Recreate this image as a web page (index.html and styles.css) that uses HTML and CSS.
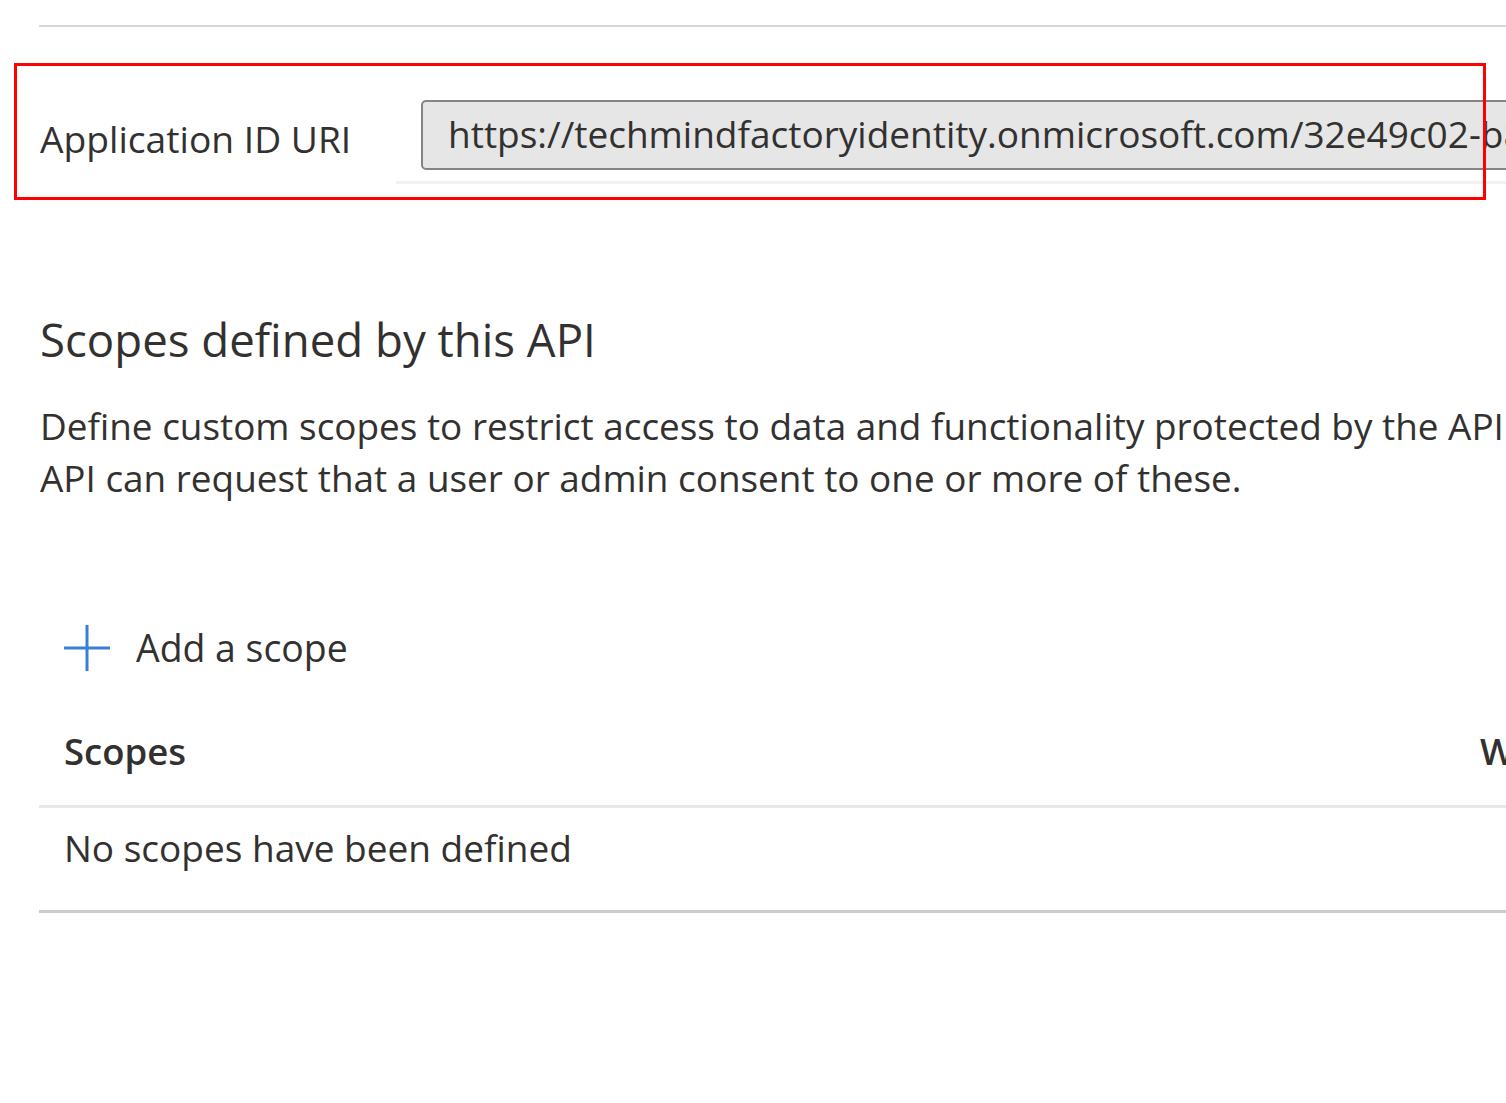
FILE: index.html
```html
<!DOCTYPE html>
<html lang="en">
<head>
<meta charset="utf-8">
<title>Expose an API</title>
<link rel="stylesheet" href="styles.css">
</head>
<body>
<div class="page">
  <div class="topline"></div>

  <div class="uri-row">
    <div class="uri-label">Application ID URI</div>
    <div class="uri-input">https://techmindfactoryidentity.onmicrosoft.com/32e49c02-b8a1-4c2e-9d3f-7a51c0e2b6d4</div>
  </div>
  <div class="uri-underline"></div>
  <div class="highlight"></div>

  <h2 class="section-title">Scopes defined by this API</h2>
  <p class="section-desc">Define custom scopes to restrict access to data and functionality protected by the API. An application that requires access to parts of this<br>API can request that a user or admin consent to one or more of these.</p>

  <div class="add-row">
    <svg class="plus" width="46" height="46" viewBox="0 0 46 46" aria-hidden="true">
      <line x1="23" y1="0" x2="23" y2="46" stroke="#3a7fd6" stroke-width="3"/>
      <line x1="0" y1="23" x2="46" y2="23" stroke="#3a7fd6" stroke-width="3"/>
    </svg>
    <span class="add-text">Add a scope</span>
  </div>

  <div class="table">
    <div class="thead">
      <div class="th th-scope">Scopes</div>
      <div class="th">Who can consent</div>
    </div>
    <div class="trow">
      <div class="td">No scopes have been defined</div>
    </div>
  </div>
</div>
</body>
</html>
```

FILE: styles.css
```css
html, body {
  margin: 0;
  padding: 0;
  background: #ffffff;
}
body {
  width: 1506px;
  overflow: hidden;
  font-family: "Open Sans", "Noto Sans", "Liberation Sans", sans-serif;
  color: #323130;
}
.page {
  position: relative;
  padding-top: 25px;
  padding-bottom: 190px;
}
.topline {
  margin-left: 39px;
  height: 2px;
  background: #d6d6d6;
}
.uri-row {
  margin-top: 73px;
  display: flex;
  align-items: center;
  height: 70px;
  padding-left: 40px;
  white-space: nowrap;
}
.uri-label {
  flex: none;
  width: 381px;
  font-size: 37.2px;
  line-height: 52px;
  position: relative;
  top: 4px;
}
.uri-input {
  flex: none;
  box-sizing: border-box;
  width: 1400px;
  height: 70px;
  border: 2px solid #858585;
  border-radius: 5px;
  background: #e6e6e6;
  padding-left: 25px;
  font-size: 37px;
  line-height: 64px;
  color: #323130;
  overflow: hidden;
}
.uri-underline {
  margin: 11px 0 0 396px;
  height: 3px;
  background: #f1f1f1;
}
.highlight {
  position: absolute;
  left: 14px;
  top: 63px;
  width: 1472px;
  height: 137px;
  box-sizing: border-box;
  border: 3px solid #ff0000;
}
.section-title {
  margin: 124px 0 0 40px;
  font-size: 45.6px;
  font-weight: 400;
  line-height: 62px;
  white-space: nowrap;
}
.section-desc {
  margin: 30px 0 0 40px;
  font-size: 36.9px;
  line-height: 52px;
  white-space: nowrap;
}
.add-row {
  margin: 114px 0 0 64px;
  display: flex;
  align-items: center;
  height: 60px;
}
.plus {
  flex: none;
  display: block;
}
.add-text {
  margin-left: 26px;
  font-size: 37.4px;
  line-height: 52px;
}
.table {
  margin-left: 39px;
}
.thead {
  display: flex;
  padding: 47px 0 28px 25px;
  border-bottom: 3px solid #e8e8e8;
  white-space: nowrap;
}
.th {
  font-size: 36.5px;
  font-weight: 600;
  line-height: 52px;
}
.th-scope {
  flex: none;
  width: 1416px;
}
.trow {
  padding: 14px 0 36px 25px;
  border-bottom: 3px solid #cccccc;
}
.td {
  font-size: 37px;
  line-height: 52px;
  white-space: nowrap;
}
```
